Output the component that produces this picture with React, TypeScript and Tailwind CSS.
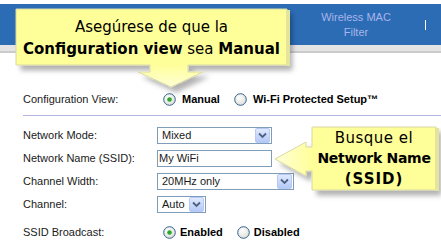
import React from 'react';

const Radio = ({ checked }: { checked?: boolean }) => (
  <svg width="13" height="13" viewBox="0 0 13 13" className="shrink-0">
    <defs>
      <radialGradient id="radioFill" cx="0.4" cy="0.35" r="0.7">
        <stop offset="0" stopColor="#ffffff" />
        <stop offset="1" stopColor="#dcdcd6" />
      </radialGradient>
    </defs>
    <circle cx="6.5" cy="6.5" r="5.8" fill="url(#radioFill)" stroke="#33628f" strokeWidth="1" />
    {checked && <circle cx="6.5" cy="6.5" r="2.3" fill="#2aa82a" />}
  </svg>
);

const DropButton = () => (
  <span className="flex h-[15px] w-[15px] shrink-0 items-center justify-center rounded-[2px] border border-[#b7c9f5] bg-gradient-to-b from-[#e0e9fd] to-[#b5c9f7]">
    <svg width="9" height="7" viewBox="0 0 9 7">
      <path d="M1 1.5 L4.5 5 L8 1.5" fill="none" stroke="#4d6185" strokeWidth="1.8" />
    </svg>
  </span>
);

const Select = ({ value, width }: { value: string; width: string }) => (
  <div className={`flex h-[17px] items-center justify-between border border-[#7f9db9] bg-white pl-[4px] pr-px ${width}`}>
    <span>{value}</span>
    <DropButton />
  </div>
);

const Row = ({ label, children }: { label: string; children: React.ReactNode }) => (
  <div className="flex h-[22px] items-center">
    <div className="w-[134px] shrink-0">{label}</div>
    {children}
  </div>
);

const Callouts = () => (
  <>
    <svg className="pointer-events-none absolute left-0 top-0" width="441" height="245">
      <defs>
        <filter id="calloutShadow" x="-10%" y="-20%" width="130%" height="160%">
          <feDropShadow dx="5" dy="5" stdDeviation="2.5" floodColor="#000000" floodOpacity="0.3" />
        </filter>
        <linearGradient id="downFade" gradientUnits="userSpaceOnUse" x1="0" y1="64" x2="0" y2="88">
          <stop offset="0" stopColor="#ffff99" />
          <stop offset="1" stopColor="#ffffd8" />
        </linearGradient>
        <linearGradient id="leftFade" gradientUnits="userSpaceOnUse" x1="313" y1="0" x2="275" y2="0">
          <stop offset="0" stopColor="#ffff99" />
          <stop offset="1" stopColor="#ffffd8" />
        </linearGradient>
      </defs>
      <path
        d="M16 9 H287 V65 H188 V72 H203 L171 87 L138 72 H150 V65 H16 Z"
        fill="url(#downFade)"
        stroke="#d8d8a6"
        strokeWidth="1"
        filter="url(#calloutShadow)"
      />
      <rect x="286" y="10" width="4" height="56" fill="#e4e49c" />
      <path
        d="M312 127 H436 V190 H312 V171 H306 V176 L275 159 L306 142 V147 H312 Z"
        fill="url(#leftFade)"
        stroke="#d8d8a6"
        strokeWidth="1"
        filter="url(#calloutShadow)"
      />
      <rect x="435" y="128" width="4" height="63" fill="#e4e49c" />
    </svg>

    <div className="absolute left-[16px] top-[9px] flex h-[56px] w-[271px] flex-col items-center pt-[7px] font-['DejaVu_Sans',Verdana,sans-serif] text-[15px] leading-[22px] text-black">
      <div>Asegúrese de que la</div>
      <div>
        <b>Configuration view</b> sea <b>Manual</b>
      </div>
    </div>

    <div className="absolute left-[312px] top-[127px] flex h-[63px] w-[124px] flex-col items-center justify-center whitespace-nowrap font-['DejaVu_Sans',Verdana,sans-serif] text-[15px] leading-[20.5px] text-black">
      <div className="tracking-[0.5px]">Busque el</div>
      <div className="text-[14px] font-bold tracking-[-0.3px]">Network Name</div>
      <div className="font-bold tracking-[1px]">(SSID)</div>
    </div>
  </>
);

export default function App() {
  return (
    <div className="relative h-[245px] w-[441px] overflow-hidden bg-white font-['Liberation_Sans',Arial,sans-serif] text-[11px] text-[#1a1a1a]">
      <div className="mt-[4px] flex h-[41px] items-center justify-end bg-[#2b6cb5] pr-[15px]">
        <div className="w-[112px] text-center leading-[15px] text-[#aab4ea]">
          Wireless MAC
          <br />
          Filter
        </div>
        <div className="ml-[13px] h-[10px] w-px bg-white" />
      </div>
      <div className="h-[8px] border-b-2 border-[#cbcbcb] bg-[#e4e4e4]" />

      <div className="pl-[23px]">
        <div className="mt-[36px] flex h-[20px] items-center">
          <div className="w-[140px] shrink-0">Configuration View:</div>
          <Radio checked />
          <span className="ml-[6px] font-bold text-black">Manual</span>
          <span className="ml-[14px] flex">
            <Radio />
          </span>
          <span className="ml-[6px] font-bold text-black">Wi-Fi Protected Setup™</span>
        </div>

        <div className="mt-[6px] h-px bg-[#b4b4e0]" />

        <div className="mt-[8px] flex flex-col gap-px">
          <Row label="Network Mode:">
            <Select value="Mixed" width="w-[115px]" />
          </Row>
          <Row label="Network Name (SSID):">
            <div className="flex h-[17px] w-[115px] items-center border border-[#7f9db9] bg-white pl-px">My WiFi</div>
          </Row>
          <Row label="Channel Width:">
            <Select value="20MHz only" width="w-[137px]" />
          </Row>
          <Row label="Channel:">
            <Select value="Auto" width="w-[49px]" />
          </Row>
        </div>

        <div className="mt-[6px] flex h-[22px] items-center">
          <div className="w-[140px] shrink-0">SSID Broadcast:</div>
          <Radio checked />
          <span className="ml-[4px] font-bold text-black">Enabled</span>
          <span className="ml-[14px] flex">
            <Radio />
          </span>
          <span className="ml-[4px] font-bold text-black">Disabled</span>
        </div>
      </div>

      <Callouts />
    </div>
  );
}
